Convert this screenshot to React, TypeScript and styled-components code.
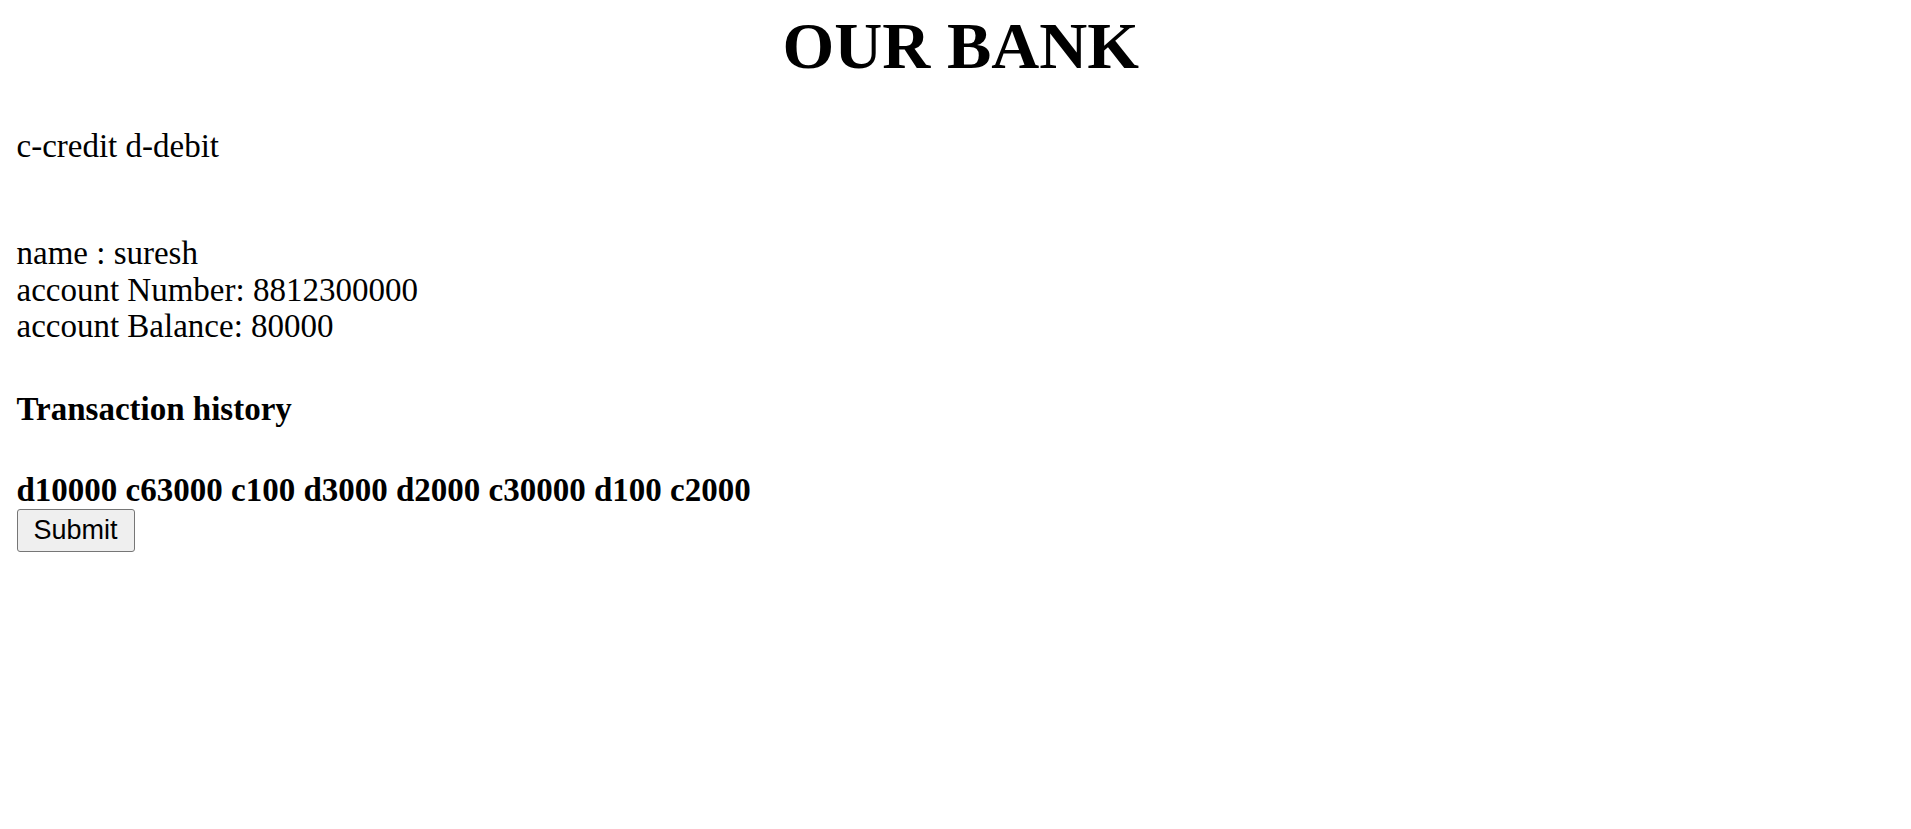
import React from "react";
import styled, { createGlobalStyle } from "styled-components";

const GlobalStyle = createGlobalStyle`
  html, body {
    margin: 0;
    padding: 0;
    background: #ffffff;
  }
  body {
    font-family: "Liberation Serif", "Times New Roman", serif;
    color: #000000;
  }
`;

const Page = styled.div`
  display: flex;
  flex-direction: column;
  align-items: flex-start;
  padding: 9.2px 16px 0 16.5px;
`;

const Title = styled.h1`
  align-self: stretch;
  margin: 0;
  padding-left: 10px;
  font-size: 66.5px;
  font-weight: bold;
  line-height: 1.107;
  text-align: center;
`;

const Text = styled.p<{ $top: number }>`
  margin: ${(p) => p.$top}px 0 0 0;
  font-size: 33px;
  line-height: 1.107;
`;

const Info = styled.div`
  margin-top: 70.5px;
  display: flex;
  flex-direction: column;
  font-size: 33px;
  line-height: 1.107;
`;

const SubHeading = styled.h4<{ $top: number }>`
  margin: ${(p) => p.$top}px 0 0 0;
  font-size: 33px;
  font-weight: bold;
  line-height: 1.107;
`;

const Button = styled.button`
  margin-top: 0.8px;
  width: 118px;
  height: 43.5px;
  font-family: "Liberation Sans", Arial, sans-serif;
  font-size: 27px;
  line-height: 1.15;
  color: #000000;
  background: #efefef;
  border: 1.5px solid #767676;
  border-radius: 3px;
  padding: 0;
  cursor: pointer;
`;

const transactions = ["d10000", "c63000", "c100", "d3000", "d2000", "c30000", "d100", "c2000"];

export default function App() {
  return (
    <>
      <GlobalStyle />
      <Page>
        <Title>OUR BANK</Title>
        <Text $top={45.6}>c-credit d-debit</Text>
        <Info>
          <span>name : suresh</span>
          <span>account Number: 8812300000</span>
          <span>account Balance: 80000</span>
        </Info>
        <SubHeading $top={46.4}>Transaction history</SubHeading>
        <SubHeading $top={43.7}>{transactions.join(" ")}</SubHeading>
        <Button type="button">Submit</Button>
      </Page>
    </>
  );
}
